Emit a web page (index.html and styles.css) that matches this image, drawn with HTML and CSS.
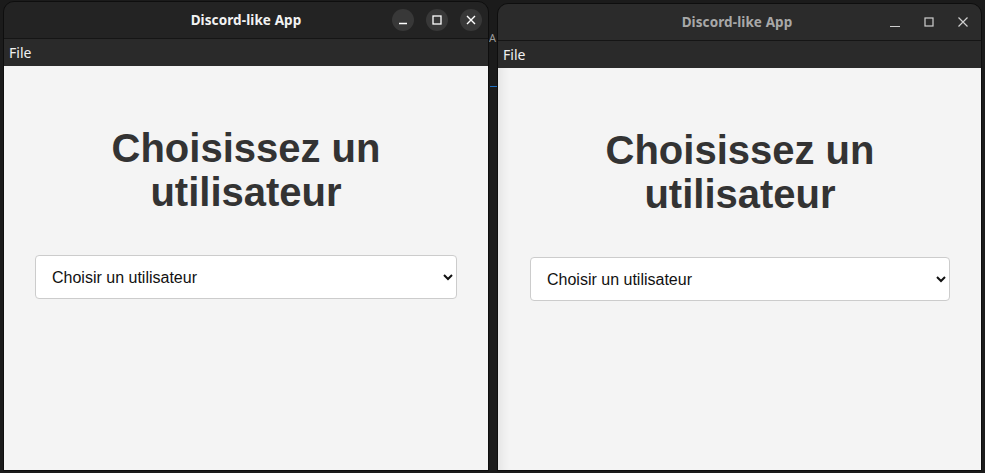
FILE: index.html
```html
<!DOCTYPE html>
<html lang="fr">
<head>
<meta charset="utf-8">
<title>Discord-like App</title>
<link rel="stylesheet" href="styles.css">
</head>
<body>
<div class="desktop">
  <div class="window window-active">
    <div class="titlebar">
      <span class="title">Discord-like App</span>
      <div class="controls">
        <span class="ctl ctl-round"><svg width="10" height="10" viewBox="0 0 10 10"><path d="M1 8.5h8" stroke="#fff" stroke-width="1.4"/></svg></span>
        <span class="ctl ctl-round"><svg width="10" height="10" viewBox="0 0 10 10"><rect x="1" y="1" width="8" height="8" fill="none" stroke="#fff" stroke-width="1.3"/></svg></span>
        <span class="ctl ctl-round"><svg width="10" height="10" viewBox="0 0 10 10"><path d="M1 1L9 9M9 1L1 9" stroke="#fff" stroke-width="1.4"/></svg></span>
      </div>
    </div>
    <div class="menubar"><span class="menu-item">File</span></div>
    <div class="content">
      <h1 class="heading">Choisissez un utilisateur</h1>
      <select class="user-select">
        <option>Choisir un utilisateur</option>
      </select>
    </div>
  </div>
  <div class="gap-col">
    <span class="bg-glyph">A</span>
    <span class="bg-line"></span>
  </div>
  <div class="window window-inactive">
    <div class="titlebar">
      <span class="title">Discord-like App</span>
      <div class="controls">
        <span class="ctl"><svg width="12" height="12" viewBox="0 0 12 12"><path d="M1 10.5h10" stroke="#cfcfcf" stroke-width="1.2"/></svg></span>
        <span class="ctl"><svg width="12" height="12" viewBox="0 0 12 12"><rect x="2" y="2" width="8" height="8" fill="none" stroke="#cfcfcf" stroke-width="1.2"/></svg></span>
        <span class="ctl"><svg width="12" height="12" viewBox="0 0 12 12"><path d="M1.5 1.5L10.5 10.5M10.5 1.5L1.5 10.5" stroke="#cfcfcf" stroke-width="1.2"/></svg></span>
      </div>
    </div>
    <div class="menubar"><span class="menu-item">File</span></div>
    <div class="content content-shaded">
      <h1 class="heading">Choisissez un utilisateur</h1>
      <select class="user-select">
        <option>Choisir un utilisateur</option>
      </select>
    </div>
  </div>
</div>
</body>
</html>
```

FILE: styles.css
```css
* { box-sizing: border-box; }
html, body {
  margin: 0;
  padding: 0;
  width: 985px;
  height: 473px;
  overflow: hidden;
  background: #1b1b1b;
}
.desktop {
  display: flex;
  align-items: flex-start;
  width: 985px;
  height: 473px;
  padding-left: 3px;
}
.window {
  display: flex;
  flex-direction: column;
  border: 1px solid #0e0e0e;
  border-top-left-radius: 11px;
  border-top-right-radius: 11px;
  overflow: hidden;
}
.window-active {
  width: 486px;
  height: 470px;
  margin-top: 1px;
}
.window-inactive {
  width: 485px;
  height: 468px;
  margin-top: 3px;
}
.gap-col {
  width: 8px;
  height: 473px;
  position: relative;
  overflow: hidden;
}
.bg-glyph {
  position: absolute;
  left: 0;
  top: 31px;
  font-family: "Noto Sans", sans-serif;
  font-size: 11px;
  line-height: 14px;
  color: #9a9a9a;
}
.bg-line {
  position: absolute;
  left: 1px;
  top: 86px;
  width: 7px;
  height: 1px;
  background: #1f6fc0;
}
.titlebar {
  position: relative;
  height: 37px;
  flex: none;
  display: flex;
  align-items: center;
  justify-content: center;
  border-bottom: 1px solid #151515;
}
.window-active .titlebar { background: #232323; }
.window-inactive .titlebar { background: #2b2b2b; }
.title {
  font-family: "Noto Sans", "DejaVu Sans", sans-serif;
  font-weight: 700;
  font-size: 13.5px;
  letter-spacing: 0.1px;
}
.window-active .title { color: #f2f2f2; }
.window-inactive .title { color: #a8a8a8; margin-right: 5px; }
.controls {
  position: absolute;
  right: 6px;
  top: 0;
  height: 36px;
  display: flex;
  align-items: center;
  gap: 12px;
}
.ctl {
  width: 22px;
  height: 22px;
  display: flex;
  align-items: center;
  justify-content: center;
}
.ctl-round {
  border-radius: 50%;
  background: #383838;
}
.window-inactive .controls { gap: 12px; right: 7px; }
.menubar {
  height: 27px;
  flex: none;
  background: #2a2a2a;
  display: flex;
  align-items: center;
  padding-left: 5px;
}
.menu-item {
  font-family: "Noto Sans", "DejaVu Sans", sans-serif;
  font-size: 14px;
  color: #f0f0f0;
}
.content {
  flex: 1;
  background: #f4f4f4;
  padding: 60px 31px 0 31px;
  display: flex;
  flex-direction: column;
  align-items: stretch;
}
.content-shaded {
  padding-left: 32px;
  box-shadow: inset 12px 0 10px -8px rgba(0,0,0,0.07);
}
.heading {
  margin: 0 0 41px 0;
  font-family: "Liberation Sans", Arial, sans-serif;
  font-weight: 700;
  font-size: 40px;
  line-height: 44px;
  color: #333333;
  text-align: center;
}
.user-select {
  height: 44px;
  width: 100%;
  font-family: "Liberation Sans", Arial, sans-serif;
  font-size: 16px;
  color: #111;
  background: #ffffff;
  border: 1px solid #cccccc;
  border-radius: 4px;
  padding: 0 12px;
}
```
